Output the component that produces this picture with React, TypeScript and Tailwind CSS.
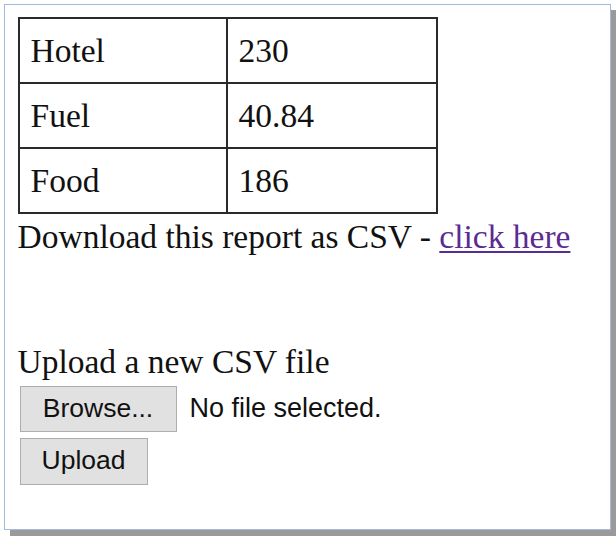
import React from "react";

const rows = [
  { name: "Hotel", amount: "230" },
  { name: "Fuel", amount: "40.84" },
  { name: "Food", amount: "186" },
];

const serif = "font-['Liberation_Serif',_'Times_New_Roman',_serif]";
const sans = "font-['Liberation_Sans',_Arial,_sans-serif]";

const App = () => {
  return (
    <div className="w-[616px] h-[538px] bg-white pt-[4px] pl-[4px]">
      <div
        className={`w-[607px] h-[526px] border-[1.5px] border-[#a2bbdc] bg-white shadow-[6px_6px_0_#9a9a9a] pt-[11.5px] pl-[12.5px] text-[33.5px] text-[#111] ${serif}`}
      >
        <table className="border-collapse border-2 border-[#2a2a2a]">
          <tbody>
            {rows.map((row) => (
              <tr key={row.name}>
                <td className="w-[208px] border-2 border-[#2a2a2a] pl-[11px] pt-[13px] pb-[12px] leading-[38px]">
                  {row.name}
                </td>
                <td className="w-[210px] border-2 border-[#2a2a2a] pl-[11px] pt-[13px] pb-[12px] leading-[38px]">
                  {row.amount}
                </td>
              </tr>
            ))}
          </tbody>
        </table>
        <p className="mt-[4px] leading-[38px]">
          Download this report as CSV -{" "}
          <a href="#" className="text-[#5b2a93] underline underline-offset-[3px] decoration-[1.5px]">
            click here
          </a>
        </p>
        <p className="mt-[87px] leading-[38px]">Upload a new CSV file</p>
        <div className="mt-[5px] flex items-center gap-[13px] pl-[2px]">
          <button
            className={`w-[157px] h-[46px] bg-[#e1e1e1] border-[1.5px] border-[#adadad] text-[26.5px] text-[#111] ${sans}`}
          >
            Browse...
          </button>
          <span className={`text-[27px] leading-[31px] text-[#111] ${sans}`}>No file selected.</span>
        </div>
        <div className="mt-[6px] flex pl-[2px]">
          <button
            className={`w-[128px] h-[47px] bg-[#e1e1e1] border-[1.5px] border-[#adadad] text-[26.5px] text-[#111] ${sans}`}
          >
            Upload
          </button>
        </div>
      </div>
    </div>
  );
};

export default App;
